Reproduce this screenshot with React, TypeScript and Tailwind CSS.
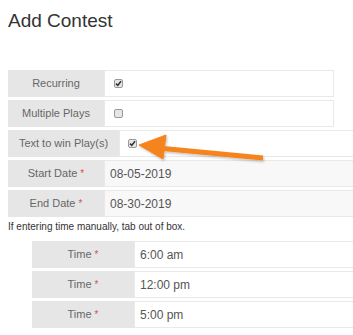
import React from "react";

const font = { fontFamily: '"Liberation Sans", Arial, sans-serif' };

function Check({ checked }: { checked: boolean }) {
  return (
    <span className="inline-flex h-[9px] w-[9px] items-center justify-center rounded-[2px] border border-[#999] bg-[#e6e6e6]">
      {checked && (
        <svg width="7" height="7" viewBox="0 0 7 7">
          <path d="M1 3.6 L2.8 5.4 L6 1.2" fill="none" stroke="#333" strokeWidth="1.6" />
        </svg>
      )}
    </span>
  );
}

function Req() {
  return <span className="ml-[3px] text-[10px] text-[#d9534f]">*</span>;
}

function Row({
  label,
  labelW,
  children,
  valueClass,
}: {
  label: React.ReactNode;
  labelW: string;
  children: React.ReactNode;
  valueClass: string;
}) {
  return (
    <div className="flex h-[27px]">
      <div className={`${labelW} flex items-center justify-center bg-[#e6e6e6] text-[11px] text-[#666]`}>{label}</div>
      <div className={`flex items-center border border-[#e9e9e9] ${valueClass}`}>{children}</div>
    </div>
  );
}

export default function App() {
  return (
    <div className="relative h-[335px] w-[353px] overflow-hidden bg-white" style={font}>
      <h1 className="mt-[10px] pl-2 text-[19px] leading-[22px] text-[#333]">Add Contest</h1>

      <div className="mt-[38px] flex flex-col gap-[3px] pl-2">
        <Row label="Recurring" labelW="w-[96px]" valueClass="w-[230px] bg-white pl-[9px]">
          <Check checked />
        </Row>
        <Row label="Multiple Plays" labelW="w-[96px]" valueClass="w-[230px] bg-white pl-[9px]">
          <Check checked={false} />
        </Row>
        <Row label="Text to win Play(s)" labelW="w-[111px]" valueClass="flex-1 border-r-0 bg-white pl-[8px]">
          <Check checked />
        </Row>
        <Row label={<>Start Date<Req /></>} labelW="w-[96px]" valueClass="flex-1 border-r-0 bg-[#f8f8f8] pl-[5px] text-[12px] text-[#555]">
          08-05-2019
        </Row>
        <Row label={<>End Date<Req /></>} labelW="w-[96px]" valueClass="flex-1 border-r-0 bg-[#f8f8f8] pl-[5px] text-[12px] text-[#555]">
          08-30-2019
        </Row>
      </div>

      <p className="mt-[4px] pl-2 text-[10px] leading-[12px] text-[#333]">If entering time manually, tab out of box.</p>

      <div className="mt-[8px] flex flex-col gap-[3px] pl-8">
        {["6:00 am", "12:00 pm", "5:00 pm"].map((t) => (
          <Row key={t} label={<>Time<Req /></>} labelW="w-[102px]" valueClass="flex-1 border-r-0 bg-white pl-[5px] text-[12px] text-[#555]">
            {t}
          </Row>
        ))}
      </div>

      <svg className="absolute left-0 top-0" width="353" height="335" viewBox="0 0 353 335">
        <defs>
          <filter id="sh" x="-10%" y="-50%" width="120%" height="200%">
            <feDropShadow dx="1" dy="1.5" stdDeviation="1" floodColor="#000" floodOpacity="0.25" />
          </filter>
        </defs>
        <g filter="url(#sh)" fill="#f5841f" stroke="#f5841f">
          <line x1="158" y1="148" x2="263" y2="158" strokeWidth="5" strokeLinecap="butt" />
          <polygon points="139,145 166,135 163,159" strokeWidth="1" strokeLinejoin="round" />
        </g>
      </svg>
    </div>
  );
}
